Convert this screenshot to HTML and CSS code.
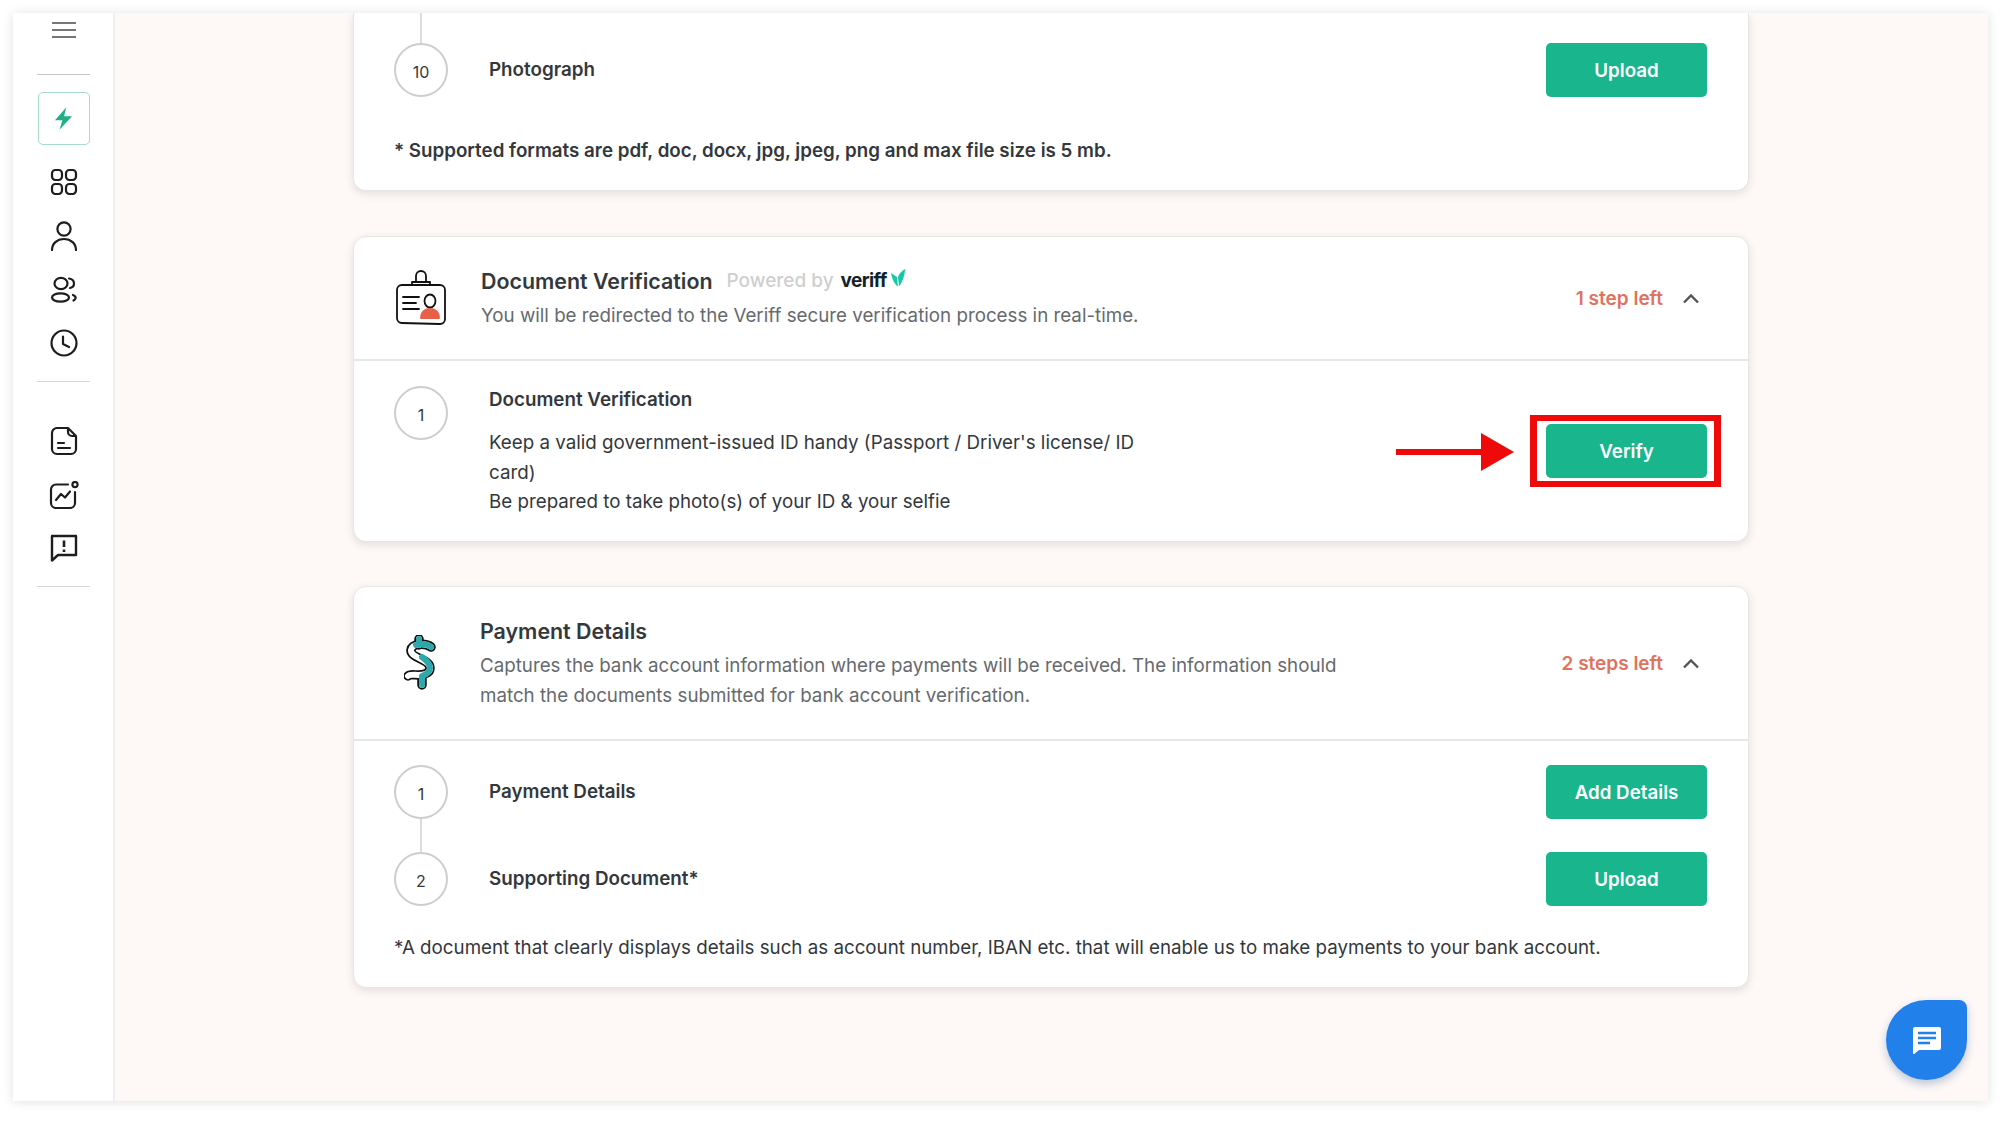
FILE: index.html
```html
<!DOCTYPE html>
<html lang="en">
<head>
<meta charset="utf-8">
<title>Onboarding steps</title>
<link rel="stylesheet" href="styles.css">
</head>
<body>
<div class="window">
  <aside class="sidebar">
    <button class="nav-menu" aria-label="Menu">
      <svg width="26" height="18" viewBox="0 0 26 18"><path d="M1 2h24M1 9h24M1 16h24" stroke="#777" stroke-width="2.2" fill="none"/></svg>
    </button>
    <hr class="nav-sep nav-sep-first">
    <div class="nav-active">
      <svg width="21" height="25" viewBox="0 0 18 22"><path d="M11.500 1 1.500 12.500H8L5.500 21 16.500 9H9.500Z" fill="#1fb184"/></svg>
    </div>
    <div class="nav-group">
      <svg class="nav-icon" width="28" height="28" viewBox="0 0 28 28" fill="none" stroke="#1d1d1f" stroke-width="2.2"><rect x="2" y="2" width="10" height="10" rx="3.4"/><rect x="16" y="2" width="10" height="10" rx="3.4"/><rect x="2" y="16" width="10" height="10" rx="3.4"/><rect x="16" y="16" width="10" height="10" rx="3.4"/></svg>
      <svg class="nav-icon" width="28" height="30" viewBox="0 0 28 30" fill="none" stroke="#1d1d1f" stroke-width="2.2" stroke-linecap="round"><circle cx="14" cy="8" r="6.6"/><path d="M2 29c0-6.500 5-11 12-11s12 4.500 12 11"/></svg>
      <svg class="nav-icon" width="28" height="28" viewBox="0 0 28 28" fill="none" stroke="#1d1d1f" stroke-width="2.2" stroke-linecap="round"><ellipse cx="11" cy="7.500" rx="6.500" ry="5.700"/><ellipse cx="10.500" cy="21.500" rx="8.500" ry="4.200"/><path d="M19 2.500c3.500.5 5 2.500 5 5 0 2-1.500 4-4 4.500M23 19c2 .8 3 1.800 2.500 3.500-.3 1-1 1.500-2 2"/></svg>
      <svg class="nav-icon" width="28" height="28" viewBox="0 0 28 28" fill="none" stroke="#1d1d1f" stroke-width="2.2" stroke-linecap="round" stroke-linejoin="round"><circle cx="14" cy="14" r="12.500"/><path d="M13 7.500V15l6 3"/></svg>
    </div>
    <hr class="nav-sep nav-sep-mid">
    <div class="nav-group nav-group-low">
      <svg class="nav-icon" width="28" height="30" viewBox="0 0 28 30" fill="none" stroke="#1d1d1f" stroke-width="2.2" stroke-linecap="round" stroke-linejoin="round"><path d="M18 2H7a5 5 0 0 0-5 5v16a5 5 0 0 0 5 5h14a5 5 0 0 0 5-5V10ZM18 2v4a4 4 0 0 0 4 4h4M8 17h6M8 22h12"/></svg>
      <svg class="nav-icon" width="30" height="28" viewBox="0 0 30 28" fill="none" stroke="#1d1d1f" stroke-width="2.2" stroke-linecap="round" stroke-linejoin="round"><path d="M19 3.500H7a5 5 0 0 0-5 5V22a5 5 0 0 0 5 5h14a5 5 0 0 0 5-5V11"/><circle cx="26" cy="3.500" r="2.600"/><path d="M7 19l5-6 4 3.500 5-6"/></svg>
      <svg class="nav-icon" width="28" height="28" viewBox="0 0 28 28" fill="none" stroke="#1d1d1f" stroke-width="2.4" stroke-linejoin="round"><path d="M2 2h24v19H8l-6 5.500Z"/><path d="M14 6.500v6.500M14 15.500v2.500" stroke-width="2.600"/></svg>
    </div>
    <hr class="nav-sep nav-sep-last">
  </aside>

  <main class="main">
    <section class="card card-clipped">
      <div class="card-body">
        <div class="rail rail-top"></div>
        <div class="step">
          <span class="step-num">10</span>
          <h3 class="step-title">Photograph</h3>
          <button class="btn">Upload</button>
        </div>
        <p class="note note-strong">* Supported formats are pdf, doc, docx, jpg, jpeg, png and max file size is 5 mb.</p>
      </div>
    </section>

    <section class="card card-doc">
      <header class="card-head head-doc">
        <div class="head-icon">
          <svg width="54" height="56" viewBox="0 0 54 56" fill="none" stroke="#111" stroke-width="1.800" stroke-linecap="round" stroke-linejoin="round"><path d="M22 12V6a5 5 0 0 1 10 0v6M18 12h18v3H18Z"/><path d="M8 15h38a5 5 0 0 1 5 5v29a5 5 0 0 1-5 5L8 53a5 5 0 0 1-5-5V20a5 5 0 0 1 5-5Z"/><path d="M9 27h16M9 33h13M9 39h16"/><ellipse cx="36" cy="31" rx="5.500" ry="6.500"/><path d="M27 48c0-6 4-9 9-9s9 3 9 9Z" fill="#e8604a" stroke="#e8604a"/></svg>
        </div>
        <div class="head-text">
          <div class="head-line">
            <h2 class="head-title">Document Verification</h2>
            <span class="powered">Powered by</span>
            <span class="veriff">veriff</span>
            <svg class="veriff-mark" width="14" height="18" viewBox="0 0 14 18"><path d="M0 4 6 8 7 17.500C3 15 .8 9 0 4Z" fill="#17c7a9"/><path d="M14 0c0 6-2.500 13-6 17.500L7 8c1.500-4 4-6 7-8Z" fill="#17c7a9"/></svg>
          </div>
          <p class="head-sub">You will be redirected to the Veriff secure verification process in real-time.</p>
        </div>
        <div class="head-status">
          <span class="steps-left">1 step left</span>
          <svg width="18" height="11" viewBox="0 0 18 11"><path d="M2 9.500 9 2.500l7 7" fill="none" stroke="#555" stroke-width="2.400"/></svg>
        </div>
      </header>
      <div class="card-body body-doc">
        <div class="step step-top">
          <span class="step-num">1</span>
          <div class="step-main">
            <h3 class="step-title">Document Verification</h3>
            <p class="step-copy">Keep a valid government-issued ID handy (Passport / Driver's license/ ID card)<br>Be prepared to take photo(s) of your ID &amp; your selfie</p>
          </div>
          <div class="annotated">
            <svg class="callout-arrow" width="118" height="38" viewBox="0 0 118 38"><path d="M0 16h85V0l33 19-33 19V22H0Z" fill="#ee0a0a"/></svg>
            <button class="btn">Verify</button>
            <span class="callout-box"></span>
          </div>
        </div>
      </div>
    </section>

    <section class="card card-pay">
      <header class="card-head head-pay">
        <div class="head-icon">
          <svg width="34" height="56" viewBox="0 0 34 56" fill="none" stroke-linecap="round" stroke-linejoin="round"><path d="M27 12C22 8 8 8 7 15C6 23 26 24 26 33C26 38 20 40 14 40C10 40 6 39 4 41M15 4v6M18 40v10" stroke="#111" stroke-width="9.500"/><path d="M27 12C22 8 8 8 7 15C6 23 26 24 26 33C26 38 20 40 14 40C10 40 6 39 4 41M15 4v6M18 40v10" stroke="#fff" stroke-width="6"/><path d="M15 4v6M27 12C23 9 17 8.500 12 10M18 22C22 25 26 28 26 33C26 38 21 40 18 41V50" stroke="#2ba9ad" stroke-width="6"/></svg>
        </div>
        <div class="head-text">
          <h2 class="head-title">Payment Details</h2>
          <p class="head-sub head-sub-wide">Captures the bank account information where payments will be received. The information should match the documents submitted for bank account verification.</p>
        </div>
        <div class="head-status">
          <span class="steps-left">2 steps left</span>
          <svg width="18" height="11" viewBox="0 0 18 11"><path d="M2 9.500 9 2.500l7 7" fill="none" stroke="#555" stroke-width="2.400"/></svg>
        </div>
      </header>
      <div class="card-body body-pay">
        <div class="step">
          <span class="step-num">1</span>
          <h3 class="step-title">Payment Details</h3>
          <button class="btn">Add Details</button>
        </div>
        <div class="rail rail-between"></div>
        <div class="step">
          <span class="step-num">2</span>
          <h3 class="step-title">Supporting Document*</h3>
          <button class="btn">Upload</button>
        </div>
        <p class="note">*A document that clearly displays details such as account number, IBAN etc. that will enable us to make payments to your bank account.</p>
      </div>
    </section>

    <button class="chat-fab" aria-label="Chat">
      <svg width="30" height="28" viewBox="0 0 30 28"><path d="M3 1h24a2 2 0 0 1 2 2v19a2 2 0 0 1-2 2H7l-6 5V3a2 2 0 0 1 2-2Z" fill="#fff"/><path d="M6 7h18M6 12h18M6 17h12" stroke="#2180ea" stroke-width="2.600"/></svg>
    </button>
  </main>
</div>
</body>
</html>
```
FILE: styles.css
```css
* { box-sizing: border-box; }
html, body { height: 100%; }
body {
  margin: 0;
  padding: 13px 12px 21px 13px;
  background: #fff;
  font-family: Inter, "Liberation Sans", sans-serif;
  color: #33383d;
}
h2, h3, p { margin: 0; }
button { font-family: inherit; border: 0; cursor: pointer; }

.window {
  display: flex;
  height: 100%;
  background: #fff;
  box-shadow: 0 1px 10px rgba(60, 70, 70, .16);
}

/* sidebar */
.sidebar {
  flex: 0 0 102px;
  display: flex;
  flex-direction: column;
  align-items: center;
  padding-top: 8px;
  padding-left: 1px;
  border-right: 2px solid #eeeeee;
  background: #fff;
}
.nav-menu { display: flex; padding: 0; background: none; }
.nav-sep { width: 53px; margin: 0; border: 0; border-top: 1px solid #d6d6d6; }
.nav-sep-first { margin-top: 35px; border-color: #c4c4c4; }
.nav-sep-mid { margin-top: 24px; }
.nav-sep-last { margin-top: 24px; }
.nav-active {
  display: flex;
  align-items: center;
  justify-content: center;
  width: 52px;
  height: 53px;
  margin-top: 17px;
  border: 1px solid #a5dcca;
  border-radius: 5px;
}
.nav-group {
  display: flex;
  flex-direction: column;
  align-items: center;
  gap: 25px;
  margin-top: 23px;
}
.nav-group-low { margin-top: 44px; }

/* main */
.main {
  position: relative;
  flex: 1;
  overflow: hidden;
  padding: 0 239px 0 238px;
  background: #fef8f7;
}
.card {
  margin-bottom: 45px;
  background: #fff;
  border: 1px solid #e8e6e3;
  border-radius: 13px;
  box-shadow: 0 3px 8px rgba(70, 70, 70, .14);
}
.card-clipped {
  height: 178px;
  border-top: 0;
  border-radius: 0 0 13px 13px;
}
.card-doc { height: 306px; margin-bottom: 44px; }
.card-pay { height: 402px; }
.card-head {
  display: flex;
  align-items: center;
  padding: 0 48px 0 40px;
  border-bottom: 2px solid #e6e6e6;
}
.head-doc { height: 124px; }
.head-pay { height: 154px; }
.head-icon { flex: 0 0 53px; display: flex; justify-content: center; margin-right: 33px; }
.head-text { flex: 1; }
.head-line { display: flex; align-items: center; }
.head-title { font-size: 21.400px; line-height: 30px; font-weight: 600; color: #33383d; }
.powered { margin-left: 14px; font-size: 19px; font-weight: 500; color: #cfcfcf; }
.veriff { margin-left: 7px; font-size: 19px; font-weight: 700; letter-spacing: -.6px; color: #10232a; }
.veriff-mark { margin: -6px 0 0 4px; }
.head-sub { margin-top: 5px; font-size: 18.750px; line-height: 30px; color: #666a6e; }
.head-sub-wide { max-width: 880px; }
.head-status { display: flex; align-items: center; gap: 19px; }
.steps-left { font-size: 19px; font-weight: 600; color: #e1725f; }

.card-body { padding: 0 41px 0 40px; }
.body-doc { padding-top: 25px; }
.body-pay { padding-top: 24px; }
.rail { width: 2px; margin-left: 26px; background: #dcdcdc; }
.rail-top { height: 30px; }
.rail-between { height: 33px; }
.step { display: flex; align-items: center; }
.step-top { align-items: flex-start; }
.step-num {
  flex: 0 0 54px;
  height: 54px;
  display: flex;
  align-items: center;
  justify-content: center;
  padding-top: 3px;
  border: 2px solid #cdcdcd;
  border-radius: 50%;
  font-size: 16px;
  color: #33383d;
}
.step-title {
  flex: 1;
  margin: 0 0 2px 41px;
  font-size: 18.800px;
  font-weight: 600;
  color: #33383d;
}
.step-main { flex: 1; margin-left: 41px; padding-top: 2px; }
.step-main .step-title { margin: 0; line-height: 24px; }
.step-copy { max-width: 660px; margin-top: 16px; font-size: 18.750px; line-height: 29.500px; color: #33383d; }
.btn {
  flex: 0 0 161px;
  width: 161px;
  height: 54px;
  border-radius: 5px;
  background: #19b58d;
  color: #fff;
  font-size: 18.750px;
  font-weight: 600;
}
.annotated { position: relative; margin-top: 38px; height: 54px; }
.callout-arrow { position: absolute; left: -150px; top: 9px; }
.callout-box {
  position: absolute;
  inset: -9px -14px -9px -16px;
  border: solid #ee0a0a;
  border-width: 6px 7px;
}
.note { font-size: 18.750px; line-height: 30px; color: #33383d; }
.note-strong { margin-top: 39px; font-weight: 600; }
.body-pay .note { margin-top: 27px; }

.chat-fab {
  position: absolute;
  right: 21px;
  bottom: 21px;
  display: flex;
  align-items: center;
  justify-content: center;
  width: 81px;
  height: 80px;
  padding: 0;
  border-radius: 50% 8px 50% 50%;
  background: #2180ea;
  box-shadow: 0 4px 8px rgba(30, 80, 140, .3);
}
```
